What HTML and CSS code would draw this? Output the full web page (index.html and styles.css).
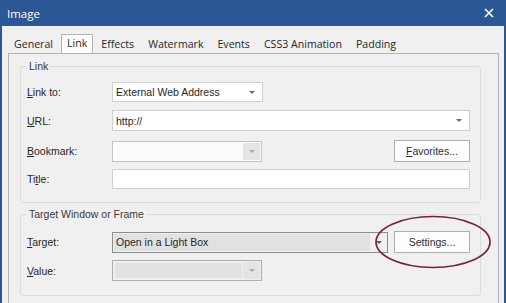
FILE: index.html
```html
<!DOCTYPE html>
<html lang="en">
<head>
    <meta charset="UTF-8">
    <title>Image</title>
    <link rel="stylesheet" href="styles.css">
</head>
<body>
    <div class="window">
        <div class="titlebar">
            <span class="title">Image</span>
            <svg class="close" width="10" height="10" viewBox="0 0 10 10">
                <path d="M1 1 L9 9 M9 1 L1 9" stroke="#fff" stroke-width="1.6"/>
            </svg>
        </div>

        <div class="tabs">
            <div class="tab">General</div>
            <div class="tab active">Link</div>
            <div class="tab">Effects</div>
            <div class="tab">Watermark</div>
            <div class="tab">Events</div>
            <div class="tab">CSS3 Animation</div>
            <div class="tab">Padding</div>
        </div>

        <div class="panel">
            <fieldset class="group group-link">
                <legend>Link</legend>
                <div class="row row-linkto">
                    <label><u>L</u>ink to:</label>
                    <div class="combo combo-short">
                        <span class="value">External Web Address</span>
                        <span class="arrow"></span>
                    </div>
                </div>
                <div class="row row-url">
                    <label><u>U</u>RL:</label>
                    <div class="combo combo-long">
                        <span class="value">http://</span>
                        <span class="arrow"></span>
                    </div>
                </div>
                <div class="row row-bookmark">
                    <label><u>B</u>ookmark:</label>
                    <div class="combo combo-short disabled">
                        <span class="value"></span>
                        <span class="drop"><span class="arrow"></span></span>
                    </div>
                    <button class="btn"><u>F</u>avorites...</button>
                </div>
                <div class="row row-title">
                    <label>Ti<u>t</u>le:</label>
                    <div class="textbox"></div>
                </div>
            </fieldset>

            <fieldset class="group group-target">
                <legend>Target Window or Frame</legend>
                <div class="row row-target">
                    <label><u>T</u>arget:</label>
                    <div class="combo combo-target">
                        <span class="value">Open in a Light Box</span>
                        <span class="drop"><span class="arrow"></span></span>
                    </div>
                    <button class="btn btn-settings">Settings...</button>
                </div>
                <div class="row row-value">
                    <label><u>V</u>alue:</label>
                    <div class="combo combo-short disabled dark">
                        <span class="value"></span>
                        <span class="drop"><span class="arrow"></span></span>
                    </div>
                </div>
            </fieldset>
        </div>

        <svg class="mark" width="120" height="56" viewBox="0 0 120 56">
            <ellipse cx="59" cy="27" rx="57" ry="25.5" fill="none" stroke="#7a1f40" stroke-width="1.7"/>
        </svg>
    </div>
</body>
</html>
```

FILE: styles.css
```css
body {
    margin: 0;
    padding: 0;
    background: #f0f0f0;
    font-family: "Liberation Sans", Arial, sans-serif;
}

.window {
    position: relative;
    width: 506px;
    height: 303px;
    box-sizing: border-box;
    border-left: 2px solid #2b5797;
    border-right: 2px solid #2b5797;
    background: #f0f0f0;
    overflow: hidden;
}

.titlebar {
    display: flex;
    align-items: center;
    justify-content: space-between;
    height: 26px;
    margin: 0 -2px;
    padding: 0 12px 0 7px;
    background: #2b5797;
    color: #fff;
    font-family: "Open Sans", "Noto Sans", sans-serif;
    font-size: 11.5px;
}

.tabs {
    display: flex;
    align-items: flex-end;
    height: 27px;
    margin-left: 5px;
    font-family: "Open Sans", "Noto Sans", sans-serif;
    font-size: 10.6px;
    color: #262626;
}

.tab {
    height: 17px;
    line-height: 17px;
    padding: 0 6px;
    border: 1px solid transparent;
    border-bottom: none;
}

.tab.active {
    position: relative;
    z-index: 1;
    padding: 0 5px;
    margin: 0 1px;
    height: 18px;
    background: #fff;
    border-color: #b4b4b4;
}

.panel {
    width: 491px;
    height: 260px;
    box-sizing: border-box;
    margin-left: 6px;
    padding: 5px 0 0 11px;
    border: 1px solid #b4b4b4;
    border-bottom: none;
}

.group {
    width: 461px;
    box-sizing: border-box;
    margin: 0;
    padding: 9px 10px 13px 6px;
    border: 1px solid #dcdcdc;
    border-radius: 3px;
    font-size: 10.5px;
    color: #262626;
}

.group legend {
    padding: 0 2px;
    line-height: 14px;
    color: #3a3a3a;
}

.group-target {
    margin-top: 4px;
    padding-top: 10px;
    padding-bottom: 14px;
}

.row {
    display: flex;
    align-items: center;
}

.row label {
    width: 85px;
    flex: none;
}

.row-linkto { height: 20px; margin-bottom: 8px; }
.row-url { height: 21px; margin-bottom: 9px; }
.row-bookmark { height: 22px; margin-bottom: 7px; }
.row-title { height: 20px; }
.row-target { height: 22px; margin-bottom: 7px; }
.row-value { height: 21px; }

.combo, .textbox {
    display: flex;
    align-items: center;
    box-sizing: border-box;
    height: 21px;
    background: #fff;
    border: 1px solid #cfcfcf;
}

.combo .value {
    flex: 1;
    padding-left: 3px;
    white-space: nowrap;
}

.combo-short { width: 150px; }
.combo-short:first-child { width: 151px; }
.row-linkto .combo { width: 151px; height: 20px; }
.combo-long, .textbox { width: 358px; }
.textbox { height: 20px; }

.arrow {
    width: 0;
    height: 0;
    margin-right: 7px;
    border-left: 3px solid transparent;
    border-right: 3px solid transparent;
    border-top: 3px solid #6a6a6a;
}

.drop {
    display: flex;
    align-items: center;
    justify-content: center;
    align-self: stretch;
    width: 17px;
}

.drop .arrow {
    margin: 0;
}

.disabled {
    background: #fbfbfb;
    border-color: #c4c4c4;
}

.disabled .drop {
    margin: 1px;
    background: #e4e4e4;
}

.disabled .arrow {
    border-top-color: #a8a8a8;
}

.disabled.dark {
    background: #f0f0f0;
    border-color: #adadad;
}

.disabled.dark .value {
    align-self: stretch;
    margin: 2px 0 2px 2px;
    background: #e2e2e2;
}

.combo-target {
    width: 276px;
    background: #f0f0f0;
    border-color: #8c8c8c;
}

.combo-target .value {
    align-self: stretch;
    display: flex;
    align-items: center;
    margin: 1px 0 1px 1px;
    padding-left: 2px;
    background: #e1e1e1;
}

.combo-target .drop .arrow {
    border-top-color: #555;
}

.btn {
    width: 76px;
    height: 22px;
    margin-left: auto;
    padding: 0;
    background: #fdfdfd;
    border: 1px solid #adadad;
    font-family: inherit;
    font-size: 10.5px;
    color: #2a2d3e;
}

.mark {
    position: absolute;
    left: 372px;
    top: 215px;
}
```
